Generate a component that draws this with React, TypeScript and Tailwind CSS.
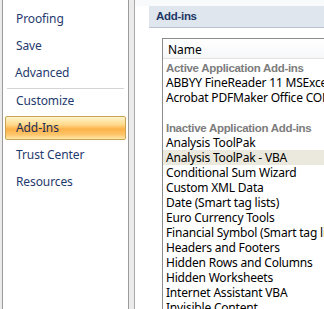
import React from "react";

const font = { fontFamily: '"Segoe UI", "Noto Sans", "Open Sans", sans-serif' };
const boldFont = { fontFamily: '"Liberation Sans", Arial, sans-serif' };

function NavItem({ label, active }: { label: string; active?: boolean }) {
  if (active) {
    return (
      <div className="mx-[2px] h-[24px] mb-[3px] flex items-center pl-[10px] rounded-[2px] border border-[#c9a455] bg-[linear-gradient(to_bottom,#fff4cc_0%,#ffd98a_35%,#fcb14a_55%,#fdc56a_80%,#ffe7a8_100%)] text-[12px] leading-[16px] tracking-[-0.1px] text-[#1c2e55]">
        {label}
      </div>
    );
  }
  return (
    <div className="mx-[2px] h-[24px] mb-[3px] flex items-center pl-[11px] text-[12px] leading-[16px] tracking-[-0.1px] text-[#1f3a6e]">
      {label}
    </div>
  );
}

const rows: { t: string; kind?: "group" | "blank" | "sel" }[] = [
  { t: "Active Application Add-ins", kind: "group" },
  { t: "ABBYY FineReader 11 MSExcel COM Add-in" },
  { t: "Acrobat PDFMaker Office COM Addin" },
  { t: "", kind: "blank" },
  { t: "Inactive Application Add-ins", kind: "group" },
  { t: "Analysis ToolPak" },
  { t: "Analysis ToolPak - VBA", kind: "sel" },
  { t: "Conditional Sum Wizard" },
  { t: "Custom XML Data" },
  { t: "Date (Smart tag lists)" },
  { t: "Euro Currency Tools" },
  { t: "Financial Symbol (Smart tag lists)" },
  { t: "Headers and Footers" },
  { t: "Hidden Rows and Columns" },
  { t: "Hidden Worksheets" },
  { t: "Internet Assistant VBA" },
  { t: "Invisible Content" },
];

export default function App() {
  return (
    <div className="w-[324px] h-[309px] flex bg-[#ebebeb] overflow-hidden" style={font}>
      <div className="ml-[2px] w-[127px] h-full bg-white border-l border-r border-[#9b9b9b] pt-[7px] shrink-0">
        <NavItem label="Proofing" />
        <NavItem label="Save" />
        <div className="mx-[2px] h-[24px] mb-[3px] flex items-center pl-[10px] text-[12px] leading-[16px] tracking-[-0.1px] text-[#1f3a6e]">
          Advanced
        </div>
        <div className="mx-[4px] h-px bg-[#d4d4d4]" />
        <NavItem label="Customize" />
        <NavItem label="Add-Ins" active />
        <NavItem label="Trust Center" />
        <NavItem label="Resources" />
      </div>
      <div className="w-[5px] shrink-0" />
      <div className="flex-1 min-w-0 h-full bg-white border-l border-[#a8a8a8] flex flex-col overflow-hidden">
        <div className="h-[6px] shrink-0 bg-[#f8fafc]" />
        <div
          className="ml-[14px] h-[22px] shrink-0 bg-[#dfe6ee] border-b border-[#b9c3cf] flex items-center pl-[7px] text-[11.5px] leading-[15px] tracking-[-0.3px] font-bold text-[#1d3666]"
          style={boldFont}
        >
          Add-ins
        </div>
        <div className="h-[10px] shrink-0" />
        <div className="ml-[27px] flex-1 min-h-0 border-l border-t border-[#8c8c8c] flex flex-col overflow-hidden">
          <div className="h-[20px] shrink-0 border-b border-[#e3e3e3] bg-[linear-gradient(to_bottom,#ffffff,#f6f7f9)] flex items-center pl-[5px] pt-[2px] text-[12px] leading-[15px] text-black whitespace-nowrap">
            Name
          </div>
          <div className="h-px shrink-0" />
          {rows.map((r, i) =>
            r.kind === "group" ? (
              <div
                key={i}
                className="h-[15px] shrink-0 flex items-center pl-[3px] pt-px text-[11.5px] leading-[14px] tracking-[-0.3px] whitespace-nowrap overflow-hidden font-bold text-[#7c7c7c]"
                style={boldFont}
              >
                {r.t}
              </div>
            ) : (
              <div
                key={i}
                className={
                  "h-[15px] shrink-0 flex items-center pl-[3px] text-[12px] leading-[15px] tracking-[-0.2px] whitespace-nowrap overflow-hidden text-black " +
                  (r.kind === "sel" ? "bg-[#ebe9dd]" : "")
                }
              >
                {r.t}
              </div>
            )
          )}
        </div>
      </div>
    </div>
  );
}
